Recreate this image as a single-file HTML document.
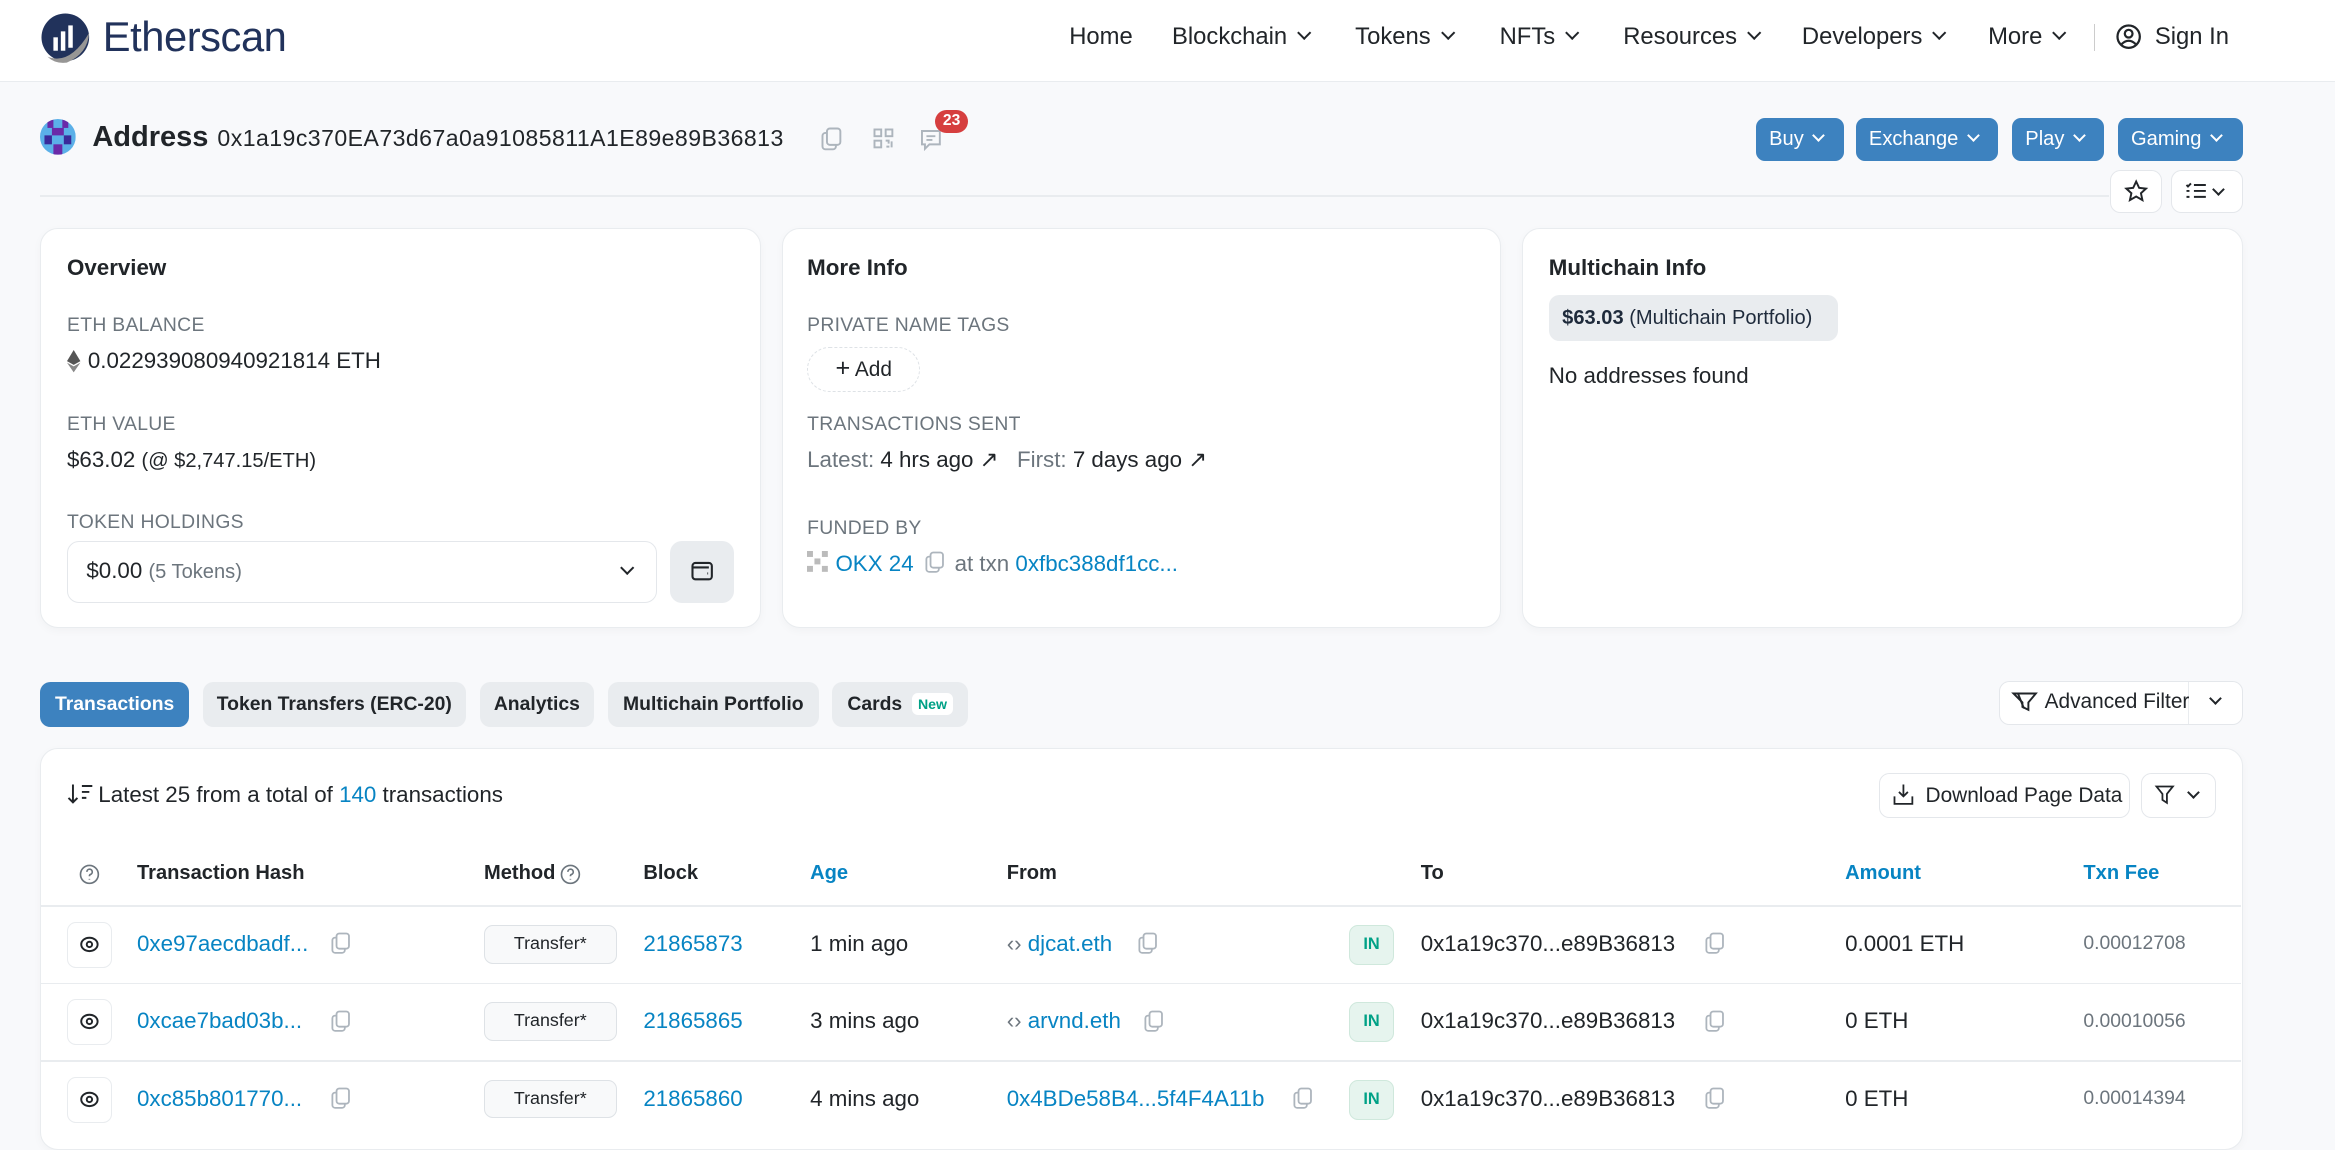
<!DOCTYPE html>
<html><head><meta charset="utf-8">
<style>
*{margin:0;padding:0;box-sizing:border-box}
html,body{width:2335px;height:1125px;overflow:hidden;background:#f8f9fb}
body{font-family:"Liberation Sans",sans-serif;color:#212529}
#w{position:absolute;left:0;top:0;width:1568px;height:756px;zoom:1.4892}
.a{position:absolute;white-space:nowrap}
.hdr{position:absolute;left:0;top:0;width:1568px;height:55px;background:#fff;border-bottom:1px solid #e9ecef}
.nav{font-size:16px;line-height:20px;top:15px}
.chev{display:inline-block;width:7px;height:7px;border-right:1.6px solid currentColor;border-bottom:1.6px solid currentColor;transform:rotate(45deg);margin-left:8px;position:relative;top:-4px}
.sc{position:absolute;width:6px;height:6px;border-right:1.4px solid #212529;border-bottom:1.4px solid #212529;transform:rotate(45deg)}
.bb{position:absolute;top:79px;height:29px;background:#3d82bf;color:#fff;border-radius:6px;font-size:13.5px;line-height:29px;padding-left:9px}
.bb .chev{width:6px;height:6px;margin-left:7px;top:-3px;border-width:1.4px}
.card{position:absolute;background:#fff;border:1px solid #e9ecef;border-radius:12px;box-shadow:0 2px 6px rgba(0,0,0,.03)}
.ttl{font-size:15px;font-weight:bold}
.lbl{font-size:13px;color:#6c757d;letter-spacing:.2px}
.v{font-size:15px}
.lk{color:#0784c3}
.tab{position:absolute;top:458px;height:30px;border-radius:7px;background:#e9ecef;font-size:13px;font-weight:bold;line-height:30px;text-align:center}
.wb{position:absolute;background:#fff;border:1px solid #e4e7eb;border-radius:7px}
.th{font-size:13.5px;font-weight:bold;top:579px;line-height:16px}
.row{font-size:15px;line-height:18px}
.eye{position:absolute;left:45px;width:30px;height:31px;border:1px solid #e9ecef;border-radius:6px;background:#fff}
.meth{position:absolute;left:325px;width:89px;height:26px;border:1px solid #dee2e6;border-radius:6px;background:#f8f9fa;font-size:12px;line-height:24px;text-align:center}
.inb{position:absolute;left:906px;width:30px;height:27px;border:1px solid #cfe8dc;border-radius:6px;background:#e6f4ee;color:#00a186;font-size:11px;font-weight:bold;line-height:25px;text-align:center}
.hr{position:absolute;left:27px;width:1478px;height:1px;background:#e9ecef}
svg{position:absolute;overflow:visible}
</style></head><body><div id="w">
<div class="hdr"></div>
<svg style="left:27px;top:8px" width="36" height="36" viewBox="0 0 36 36">
<circle cx="17" cy="17" r="16" fill="#21325b"/>
<path d="M5 30 Q20 36 33 14 Q32 28 18 34 Q10 35 5 30Z" fill="#979695"/>
<rect x="9" y="17" width="3" height="9" fill="#fff"/><rect x="14" y="13" width="3" height="13" fill="#fff"/><rect x="19" y="9" width="3" height="15" fill="#fff"/>
</svg>
<div class="a" style="left:69px;top:8px;font-size:28px;line-height:34px;color:#21325b;letter-spacing:-.3px">Etherscan</div>
<div class="a nav" style="left:718px">Home</div>
<div class="a nav" style="left:787px">Blockchain<span class="chev"></span></div>
<div class="a nav" style="left:910px">Tokens<span class="chev"></span></div>
<div class="a nav" style="left:1007px">NFTs<span class="chev"></span></div>
<div class="a nav" style="left:1090px">Resources<span class="chev"></span></div>
<div class="a nav" style="left:1210px">Developers<span class="chev"></span></div>
<div class="a nav" style="left:1335px">More<span class="chev"></span></div>
<div class="a" style="left:1406px;top:16px;width:1px;height:18px;background:#ccc"></div>
<svg style="left:1421px;top:16px" width="17" height="17" viewBox="0 0 17 17" fill="none" stroke="#212529" stroke-width="1.5"><circle cx="8.5" cy="8.5" r="7.5"/><circle cx="8.5" cy="6.5" r="2.6"/><path d="M3.8 13.5 Q8.5 9 13.2 13.5"/></svg>
<div class="a nav" style="left:1447px">Sign In</div>

<svg style="left:27px;top:80px" width="24" height="24" viewBox="0 0 24 24"><defs><clipPath id="c"><circle cx="12" cy="12" r="12"/></clipPath></defs><g clip-path="url(#c)"><rect width="24" height="24" fill="#5bb0e8"/><rect x="5" y="0" width="4" height="6" fill="#6a2aa8"/><rect x="15" y="0" width="4" height="6" fill="#6a2aa8"/><rect x="8" y="6" width="8" height="5" fill="#6a2aa8"/><rect x="3" y="11" width="5" height="6" fill="#3a2a9a"/><rect x="16" y="11" width="5" height="6" fill="#3a2a9a"/><rect x="9" y="17" width="6" height="7" fill="#6a2aa8"/></g></svg>
<div class="a" style="left:62px;top:81px;font-size:19.5px;font-weight:bold;line-height:22px">Address</div>
<div class="a" style="left:146px;top:84px;font-size:15.5px;line-height:18px;letter-spacing:.3px">0x1a19c370EA73d67a0a91085811A1E89e89B36813</div>
<svg style="left:551px;top:85px" width="14" height="16" viewBox="0 0 14 16" fill="none" stroke="#adb5bd" stroke-width="1.3"><rect x="4" y="1" width="9" height="11" rx="2"/><path d="M4 4H3a2 2 0 0 0-2 2v7a2 2 0 0 0 2 2h5a2 2 0 0 0 2-2v-1"/></svg>
<svg style="left:586px;top:86px" width="14" height="14" viewBox="0 0 14 14" fill="none" stroke="#adb5bd" stroke-width="1.3"><rect x="1" y="1" width="4.5" height="4.5"/><rect x="8.5" y="1" width="4.5" height="4.5"/><rect x="1" y="8.5" width="4.5" height="4.5"/><path d="M8.5 8.5h2v2M12.5 9v4M9 12.5h2"/></svg>
<svg style="left:617px;top:86px" width="16" height="16" viewBox="0 0 16 16" fill="none" stroke="#adb5bd" stroke-width="1.3"><path d="M2 2h12v9H7l-3 3v-3H2z"/><path d="M5 5.5h6M5 8h4"/></svg>
<div class="a" style="left:628px;top:74px;width:22px;height:15px;background:#d63f3f;border-radius:8px;color:#fff;font-size:10.5px;line-height:15px;text-align:center;font-weight:bold">23</div>
<div class="bb" style="left:1179px;width:59px">Buy<span class="chev"></span></div>
<div class="bb" style="left:1246px;width:96px">Exchange<span class="chev"></span></div>
<div class="bb" style="left:1351px;width:62px">Play<span class="chev"></span></div>
<div class="bb" style="left:1422px;width:84px">Gaming<span class="chev"></span></div>
<div class="a" style="left:27px;top:131px;width:1389px;height:1px;background:#e9ecef"></div>
<div class="wb" style="left:1417px;top:114px;width:35px;height:29px"></div>
<svg style="left:1427px;top:121px" width="15" height="15" viewBox="0 0 15 15" fill="none" stroke="#212529" stroke-width="1.3"><path d="M7.5 1l2 4.3 4.6.5-3.4 3.1 1 4.6-4.2-2.4-4.2 2.4 1-4.6L.9 5.8l4.6-.5z"/></svg>
<div class="wb" style="left:1458px;top:114px;width:48px;height:29px"></div>
<svg style="left:1467px;top:122px" width="14" height="12" viewBox="0 0 14 12" fill="none" stroke="#212529" stroke-width="1.3"><path d="M1 2l1 1 2-2M6 2h8M6 6h8M6 10h8M1 6h2M1 10h2"/></svg>
<span class="sc" style="left:1487px;top:124px"></span>

<div class="card" style="left:27px;top:153px;width:484px;height:269px"></div>
<div class="card" style="left:525px;top:153px;width:483px;height:269px"></div>
<div class="card" style="left:1022px;top:153px;width:484px;height:269px"></div>

<div class="a ttl" style="left:45px;top:171px">Overview</div>
<div class="a lbl" style="left:45px;top:211px">ETH BALANCE</div>
<svg style="left:45px;top:235px" width="9" height="15" viewBox="0 0 9 15"><path d="M4.5 0L0 7.5 4.5 10 9 7.5z" fill="#555"/><path d="M4.5 11L0 8.5 4.5 15 9 8.5z" fill="#888"/></svg>
<div class="a v" style="left:59px;top:234px">0.022939080940921814 ETH</div>
<div class="a lbl" style="left:45px;top:277px">ETH VALUE</div>
<div class="a v" style="left:45px;top:300px">$63.02 <span style="font-size:13.5px">(@ $2,747.15/ETH)</span></div>
<div class="a lbl" style="left:45px;top:343px">TOKEN HOLDINGS</div>
<div class="wb" style="left:45px;top:363px;width:396px;height:42px;border-radius:8px"></div>
<div class="a v" style="left:58px;top:375px">$0.00 <span style="font-size:13.5px;color:#6c757d">(5 Tokens)</span></div>
<span class="sc" style="left:418px;top:378px;width:7px;height:7px;border-width:1.6px"></span>
<div class="a" style="left:450px;top:363px;width:43px;height:42px;background:#e9ecef;border-radius:8px"></div>
<svg style="left:464px;top:376px" width="15" height="15" viewBox="0 0 15 15" fill="none" stroke="#212529" stroke-width="1.4"><rect x="1" y="2" width="13" height="11" rx="2"/><path d="M1 5h11M11 9h.5"/></svg>

<div class="a ttl" style="left:542px;top:171px">More Info</div>
<div class="a lbl" style="left:542px;top:211px">PRIVATE NAME TAGS</div>
<div class="a" style="left:542px;top:233px;width:76px;height:30px;border:1px dashed #dee2e6;border-radius:15px;font-size:14px;line-height:28px;text-align:center"><span style="font-size:17px">+</span> Add</div>
<div class="a lbl" style="left:542px;top:277px">TRANSACTIONS SENT</div>
<div class="a v" style="left:542px;top:300px"><span style="color:#6c757d">Latest:</span> 4 hrs ago ↗&nbsp;&nbsp;&nbsp;<span style="color:#6c757d">First:</span> 7 days ago ↗</div>
<div class="a lbl" style="left:542px;top:347px">FUNDED BY</div>
<svg style="left:542px;top:370px" width="14" height="14" viewBox="0 0 14 14" fill="#bbb"><rect x="0" y="0" width="4" height="4"/><rect x="10" y="0" width="4" height="4"/><rect x="5" y="5" width="4" height="4"/><rect x="0" y="10" width="4" height="4"/><rect x="10" y="10" width="4" height="4"/></svg>
<div class="a v" style="left:561px;top:370px"><span class="lk">OKX 24</span></div>
<svg style="left:621px;top:370px" width="13" height="15" viewBox="0 0 14 16" fill="none" stroke="#adb5bd" stroke-width="1.3"><rect x="4" y="1" width="9" height="11" rx="2"/><path d="M4 4H3a2 2 0 0 0-2 2v7a2 2 0 0 0 2 2h5a2 2 0 0 0 2-2v-1"/></svg>
<div class="a v" style="left:641px;top:370px"><span style="color:#6c757d">at txn</span> <span class="lk">0xfbc388df1cc...</span></div>

<div class="a ttl" style="left:1040px;top:171px">Multichain Info</div>
<div class="a" style="left:1040px;top:198px;width:194px;height:31px;background:#e9ecef;border-radius:7px;font-size:13.5px;line-height:31px;padding-left:9px;color:#1e2a3b"><b>$63.03</b> (Multichain Portfolio)</div>
<div class="a v" style="left:1040px;top:244px">No addresses found</div>

<div class="tab" style="left:27px;width:100px;background:#3d82bf;color:#fff">Transactions</div>
<div class="tab" style="left:136px;width:177px">Token Transfers (ERC-20)</div>
<div class="tab" style="left:322px;width:77px">Analytics</div>
<div class="tab" style="left:408px;width:142px">Multichain Portfolio</div>
<div class="tab" style="left:559px;width:91px;text-align:left;padding-left:10px">Cards <span style="display:inline-block;background:#fff;color:#00a186;font-size:9.5px;line-height:15px;padding:0 4px;border-radius:4px;margin-left:3px;vertical-align:1px">New</span></div>
<div class="wb" style="left:1342px;top:457px;width:164px;height:30px"></div>
<div class="a" style="left:1469px;top:458px;width:1px;height:28px;background:#e9ecef"></div>
<svg style="left:1351px;top:465px" width="17" height="13" viewBox="0 0 17 13" fill="none" stroke="#212529" stroke-width="1.3"><path d="M1 1h15l-5 6v5l-4-2V7z"/><path d="M4 1l4 10"/></svg>
<div class="a" style="left:1373px;top:463px;font-size:14px;line-height:17px">Advanced Filter</div>
<span class="sc" style="left:1485px;top:466px"></span>

<div class="card" style="left:27px;top:502px;width:1479px;height:270px;border-radius:12px"></div>
<svg style="left:45px;top:526px" width="18" height="15" viewBox="0 0 18 15" fill="none" stroke="#212529" stroke-width="1.3"><path d="M4 1v12M1 10l3 3 3-3M10 2h7M10 6h5M10 10h3"/></svg>
<div class="a v" style="left:66px;top:525px">Latest 25 from a total of <span class="lk">140</span> transactions</div>
<div class="wb" style="left:1262px;top:519px;width:168px;height:30px"></div>
<svg style="left:1271px;top:526px" width="14" height="15" viewBox="0 0 14 15" fill="none" stroke="#212529" stroke-width="1.2"><path d="M7 1v8M4 6l3 3 3-3M1 9v5h12V9"/></svg>
<div class="a" style="left:1293px;top:526px;font-size:14px;line-height:17px">Download Page Data</div>
<div class="wb" style="left:1438px;top:519px;width:50px;height:30px"></div>
<svg style="left:1447px;top:527px" width="13" height="13" viewBox="0 0 13 13" fill="none" stroke="#212529" stroke-width="1.2"><path d="M1 1h11L8 6v6L5 10V6z"/></svg>
<span class="sc" style="left:1470px;top:529px"></span>

<svg style="left:53px;top:580px" width="14" height="14" viewBox="0 0 14 14" fill="none" stroke="#6c757d" stroke-width="1.1"><circle cx="7" cy="7" r="6"/><path d="M5.3 5.3a1.8 1.8 0 1 1 2.4 1.7c-.5.2-.7.6-.7 1.2M7 10v.5"/></svg>
<div class="a th" style="left:92px">Transaction Hash</div>
<div class="a th" style="left:325px">Method</div>
<svg style="left:376px;top:580px" width="14" height="14" viewBox="0 0 14 14" fill="none" stroke="#6c757d" stroke-width="1.1"><circle cx="7" cy="7" r="6"/><path d="M5.3 5.3a1.8 1.8 0 1 1 2.4 1.7c-.5.2-.7.6-.7 1.2M7 10v.5"/></svg>
<div class="a th" style="left:432px">Block</div>
<div class="a th lk" style="left:544px">Age</div>
<div class="a th" style="left:676px">From</div>
<div class="a th" style="left:954px">To</div>
<div class="a th lk" style="left:1239px">Amount</div>
<div class="a th lk" style="left:1399px">Txn Fee</div>
<div class="hr" style="top:608px"></div>
<div class="hr" style="top:660px"></div>
<div class="hr" style="top:712px"></div>

<div class="eye" style="top:619px"></div>
<div class="eye" style="top:671px"></div>
<div class="eye" style="top:723px"></div>
<svg style="left:53px;top:627px" width="14" height="14" viewBox="0 0 14 14" fill="none" stroke="#212529" stroke-width="1.3"><ellipse cx="7" cy="7" rx="5.5" ry="4.5"/><circle cx="7" cy="7" r="1.8"/></svg>
<svg style="left:53px;top:679px" width="14" height="14" viewBox="0 0 14 14" fill="none" stroke="#212529" stroke-width="1.3"><ellipse cx="7" cy="7" rx="5.5" ry="4.5"/><circle cx="7" cy="7" r="1.8"/></svg>
<svg style="left:53px;top:731px" width="14" height="14" viewBox="0 0 14 14" fill="none" stroke="#212529" stroke-width="1.3"><ellipse cx="7" cy="7" rx="5.5" ry="4.5"/><circle cx="7" cy="7" r="1.8"/></svg>

<div class="a row lk" style="left:92px;top:625px">0xe97aecdbadf...</div>
<div class="a row lk" style="left:92px;top:677px">0xcae7bad03b...</div>
<div class="a row lk" style="left:92px;top:729px">0xc85b801770...</div>
<svg style="left:222px;top:626px" width="13" height="15" viewBox="0 0 14 16" fill="none" stroke="#adb5bd" stroke-width="1.3"><rect x="4" y="1" width="9" height="11" rx="2"/><path d="M4 4H3a2 2 0 0 0-2 2v7a2 2 0 0 0 2 2h5a2 2 0 0 0 2-2v-1"/></svg>
<svg style="left:222px;top:678px" width="13" height="15" viewBox="0 0 14 16" fill="none" stroke="#adb5bd" stroke-width="1.3"><rect x="4" y="1" width="9" height="11" rx="2"/><path d="M4 4H3a2 2 0 0 0-2 2v7a2 2 0 0 0 2 2h5a2 2 0 0 0 2-2v-1"/></svg>
<svg style="left:222px;top:730px" width="13" height="15" viewBox="0 0 14 16" fill="none" stroke="#adb5bd" stroke-width="1.3"><rect x="4" y="1" width="9" height="11" rx="2"/><path d="M4 4H3a2 2 0 0 0-2 2v7a2 2 0 0 0 2 2h5a2 2 0 0 0 2-2v-1"/></svg>

<div class="meth" style="top:621px">Transfer*</div>
<div class="meth" style="top:673px">Transfer*</div>
<div class="meth" style="top:725px">Transfer*</div>
<div class="a row lk" style="left:432px;top:625px">21865873</div>
<div class="a row lk" style="left:432px;top:677px">21865865</div>
<div class="a row lk" style="left:432px;top:729px">21865860</div>
<div class="a row" style="left:544px;top:625px">1 min ago</div>
<div class="a row" style="left:544px;top:677px">3 mins ago</div>
<div class="a row" style="left:544px;top:729px">4 mins ago</div>

<div class="a row lk" style="left:676px;top:625px"><span style="color:#6c757d">‹›</span> djcat.eth</div>
<div class="a row lk" style="left:676px;top:677px"><span style="color:#6c757d">‹›</span> arvnd.eth</div>
<div class="a row lk" style="left:676px;top:729px">0x4BDe58B4...5f4F4A11b</div>
<svg style="left:764px;top:626px" width="13" height="15" viewBox="0 0 14 16" fill="none" stroke="#adb5bd" stroke-width="1.3"><rect x="4" y="1" width="9" height="11" rx="2"/><path d="M4 4H3a2 2 0 0 0-2 2v7a2 2 0 0 0 2 2h5a2 2 0 0 0 2-2v-1"/></svg>
<svg style="left:768px;top:678px" width="13" height="15" viewBox="0 0 14 16" fill="none" stroke="#adb5bd" stroke-width="1.3"><rect x="4" y="1" width="9" height="11" rx="2"/><path d="M4 4H3a2 2 0 0 0-2 2v7a2 2 0 0 0 2 2h5a2 2 0 0 0 2-2v-1"/></svg>
<svg style="left:868px;top:730px" width="13" height="15" viewBox="0 0 14 16" fill="none" stroke="#adb5bd" stroke-width="1.3"><rect x="4" y="1" width="9" height="11" rx="2"/><path d="M4 4H3a2 2 0 0 0-2 2v7a2 2 0 0 0 2 2h5a2 2 0 0 0 2-2v-1"/></svg>

<div class="inb" style="top:621px">IN</div>
<div class="inb" style="top:673px">IN</div>
<div class="inb" style="top:725px">IN</div>
<div class="a row" style="left:954px;top:625px">0x1a19c370...e89B36813</div>
<div class="a row" style="left:954px;top:677px">0x1a19c370...e89B36813</div>
<div class="a row" style="left:954px;top:729px">0x1a19c370...e89B36813</div>
<svg style="left:1145px;top:626px" width="13" height="15" viewBox="0 0 14 16" fill="none" stroke="#adb5bd" stroke-width="1.3"><rect x="4" y="1" width="9" height="11" rx="2"/><path d="M4 4H3a2 2 0 0 0-2 2v7a2 2 0 0 0 2 2h5a2 2 0 0 0 2-2v-1"/></svg>
<svg style="left:1145px;top:678px" width="13" height="15" viewBox="0 0 14 16" fill="none" stroke="#adb5bd" stroke-width="1.3"><rect x="4" y="1" width="9" height="11" rx="2"/><path d="M4 4H3a2 2 0 0 0-2 2v7a2 2 0 0 0 2 2h5a2 2 0 0 0 2-2v-1"/></svg>
<svg style="left:1145px;top:730px" width="13" height="15" viewBox="0 0 14 16" fill="none" stroke="#adb5bd" stroke-width="1.3"><rect x="4" y="1" width="9" height="11" rx="2"/><path d="M4 4H3a2 2 0 0 0-2 2v7a2 2 0 0 0 2 2h5a2 2 0 0 0 2-2v-1"/></svg>

<div class="a row" style="left:1239px;top:625px">0.0001 ETH</div>
<div class="a row" style="left:1239px;top:677px">0 ETH</div>
<div class="a row" style="left:1239px;top:729px">0 ETH</div>
<div class="a" style="left:1399px;top:626px;font-size:13px;color:#6c757d">0.00012708</div>
<div class="a" style="left:1399px;top:678px;font-size:13px;color:#6c757d">0.00010056</div>
<div class="a" style="left:1399px;top:730px;font-size:13px;color:#6c757d">0.00014394</div>
</div></body></html>
